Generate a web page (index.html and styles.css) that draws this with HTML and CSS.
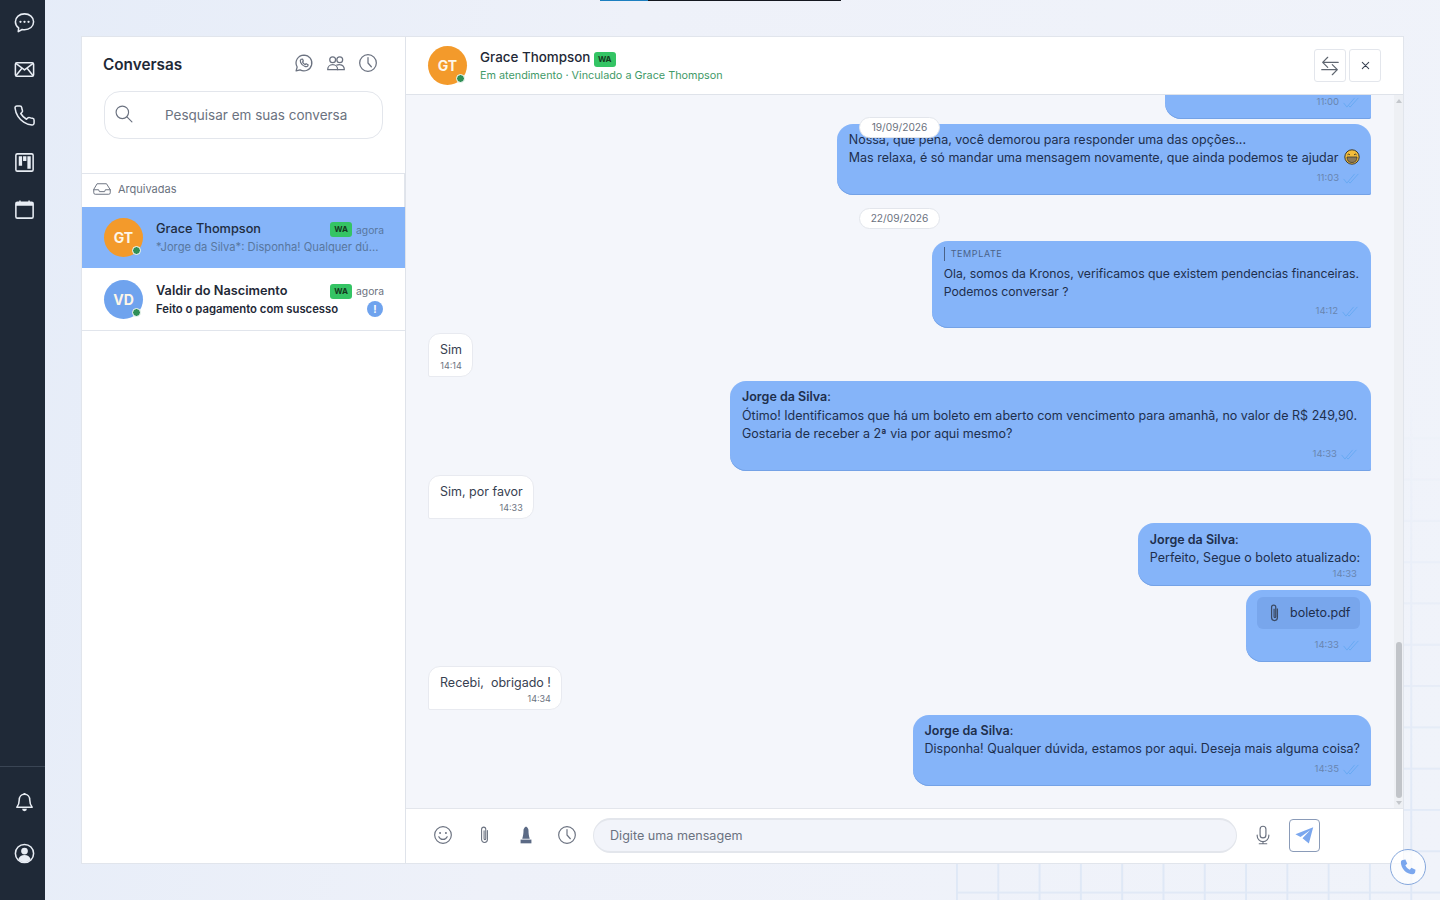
FILE: index.html
```html
<!DOCTYPE html>
<html lang="pt-br">

<head>
    <meta charset="UTF-8">
    <title>Conversas</title>
    <link rel="stylesheet" href="styles.css">
</head>

<body>
    <svg class="defs" aria-hidden="true">
        <symbol id="i-clock" viewBox="0 0 24 24"><circle cx="12" cy="12" r="10"/><path d="M12 5.500V12l4 4.500"/></symbol>
        <symbol id="i-check" viewBox="0 0 18 12"><path d="M1 6.500L4.500 11 13 1M6 9l2 2L17 1"/></symbol>
        <symbol id="i-clip" viewBox="0 0 12 24"><path d="M9.500 6.500v11a3.500 3.500 0 0 1-7 0V5a2.500 2.500 0 0 1 5 0v11.500a1 1 0 0 1-2 0V7"/></symbol>
    </svg>

    <div class="top_strip"></div>
    <div class="bg_grid"></div>

    <nav class="rail">
        <div class="rail_group">
            <a class="rail_item">
                <svg viewBox="0 0 24 24"><path d="M12 3c5.300 0 9.500 3.600 9.500 8.300s-4.200 8.300-9.500 8.300c-.9 0-1.700-.1-2.500-.3L5.500 21.500l.4-3.800C3.800 16.200 2.500 13.900 2.500 11.300 2.500 6.600 6.700 3 12 3z"/><circle class="fill" cx="7.800" cy="11.300" r="1.200"/><circle class="fill" cx="12" cy="11.300" r="1.200"/><circle class="fill" cx="16.200" cy="11.300" r="1.200"/></svg>
            </a>
            <a class="rail_item">
                <svg viewBox="0 0 24 24"><rect x="2.500" y="5" width="19" height="14" rx="1.500"/><path d="M3 5.500l9 7 9-7M3 18.500l6.500-8M21 18.500l-6.500-8"/></svg>
            </a>
            <a class="rail_item">
                <svg viewBox="0 0 24 24"><path d="M22 16.920v3a2 2 0 0 1-2.180 2 19.790 19.790 0 0 1-8.630-3.070 19.500 19.500 0 0 1-6-6 19.790 19.790 0 0 1-3.070-8.670A2 2 0 0 1 4.110 2h3a2 2 0 0 1 2 1.720 12.840 12.840 0 0 0 .7 2.810 2 2 0 0 1-.45 2.110L8.090 9.910a16 16 0 0 0 6 6l1.270-1.270a2 2 0 0 1 2.110-.45 12.840 12.840 0 0 0 2.810.7A2 2 0 0 1 22 16.920z"/></svg>
            </a>
            <a class="rail_item">
                <svg viewBox="0 0 24 24"><rect x="3" y="3" width="18" height="18" rx="1.500"/><path class="fill" d="M6 5.500h3.500v10H6zM10.500 5.500h3.500v5h-3.500zM15 5.500h3.500v13H15z"/></svg>
            </a>
            <a class="rail_item">
                <svg viewBox="0 0 24 24"><rect x="3" y="4.500" width="18" height="16.500" rx="1.500"/><path class="fill" d="M3 4.500h18v3.500H3zM6.500 2.500h1.500v2H6.500zM16 2.500h1.500v2H16z"/></svg>
            </a>
        </div>
        <div class="rail_group rail_bottom">
            <a class="rail_item">
                <svg viewBox="0 0 24 24"><path d="M12 3.500c-3.500 0-5.500 2.700-5.500 6 0 4-1 5.800-2.500 7.500h16c-1.500-1.700-2.500-3.500-2.500-7.500 0-3.300-2-6-5.500-6z"/><path class="fill" d="M9.500 18.500h5a2.500 2.500 0 0 1-5 0zM11 2h2v2h-2z"/></svg>
            </a>
            <a class="rail_item">
                <svg viewBox="0 0 24 24"><circle cx="12" cy="12" r="9.500"/><circle class="fill" cx="12" cy="9.500" r="3.500"/><path class="fill" d="M5.500 18c1-3 3.500-4.500 6.500-4.500s5.500 1.500 6.500 4.500c-1.700 2-4 3-6.500 3s-4.800-1-6.500-3z"/></svg>
            </a>
        </div>
    </nav>

    <main class="page">
        <div class="card">

            <!-- lista de conversas -->
            <aside class="list_panel">
                <div class="list_head">
                    <h1>Conversas</h1>
                    <div class="list_tools">
                        <svg class="ico" viewBox="0 0 24 24"><path d="M12 2.500a9.500 9.500 0 0 0-8.200 14.300L2.500 21.500l4.800-1.200A9.500 9.500 0 1 0 12 2.500z"/><path d="M8.500 7.500c-1 .8-1.200 2.200-.5 3.800 1 2.200 3 4.100 5.200 4.900 1.500.5 2.700.2 3.400-.8l.3-1.300-2.400-1.200-1 1c-1.300-.5-2.600-1.800-3.200-3.200l.9-1-1-2.400z"/></svg>
                        <svg class="ico" viewBox="0 0 24 24"><circle cx="8" cy="8" r="3.500"/><circle cx="16.500" cy="8" r="3.500"/><path d="M2 20c0-3.500 2.500-6 6-6s6 2.500 6 6H2z"/><path d="M13 14.500c1-.5 2.200-.8 3.500-.6 3 .3 5.500 2.600 5.500 6.100h-8"/></svg>
                        <svg class="ico"><use href="#i-clock"/></svg>
                    </div>
                </div>

                <label class="search">
                    <svg class="ico search_ico" viewBox="0 0 24 24"><circle cx="10" cy="10" r="7.500"/><path d="M15.500 15.500l6 6"/></svg>
                    <input type="text" placeholder="Pesquisar em suas conversa">
                </label>

                <div class="archived">
                    <svg class="ico" viewBox="0 0 24 24"><path d="M6 5h12l5 8v4a2 2 0 0 1-2 2H3a2 2 0 0 1-2-2v-4z"/><path d="M1 13h6.500l1 2.500h7l1-2.500H23"/></svg>
                    <span>Arquivadas</span>
                </div>

                <div class="conv conv_active">
                    <div class="avatar avatar_orange">GT<span class="dot"></span></div>
                    <div class="conv_body">
                        <div class="conv_line">
                            <span class="conv_name">Grace Thompson</span>
                            <span class="badge_wa">WA</span>
                            <span class="conv_time">agora</span>
                        </div>
                        <div class="conv_line">
                            <span class="conv_last">*Jorge da Silva*: Disponha! Qualquer dú...</span>
                        </div>
                    </div>
                </div>

                <div class="conv">
                    <div class="avatar avatar_blue">VD<span class="dot"></span></div>
                    <div class="conv_body">
                        <div class="conv_line">
                            <span class="conv_name conv_name_strong">Valdir do Nascimento</span>
                            <span class="badge_wa">WA</span>
                            <span class="conv_time">agora</span>
                        </div>
                        <div class="conv_line">
                            <span class="conv_last conv_last_strong">Feito o pagamento com suscesso</span>
                            <span class="unread">!</span>
                        </div>
                    </div>
                </div>
            </aside>

            <!-- chat -->
            <section class="chat">
                <header class="chat_head">
                    <div class="avatar avatar_orange">GT<span class="dot"></span></div>
                    <div class="chat_who">
                        <div class="chat_name">Grace Thompson <span class="badge_wa">WA</span></div>
                        <div class="chat_status">Em atendimento · Vinculado a Grace Thompson</div>
                    </div>
                    <div class="chat_actions">
                        <button class="btn_square">
                            <svg class="ico ico_btn" viewBox="0 0 24 24"><path d="M21 8H4M9.500 2.500L4 8l5.500 5.500"/><path d="M3 16h17M14.500 10.500L20 16l-5.500 5.500"/></svg>
                        </button>
                        <button class="btn_square">
                            <svg class="ico ico_x" viewBox="0 0 24 24"><path d="M5 5l14 14M19 5L5 19"/></svg>
                        </button>
                    </div>
                </header>

                <div class="chat_mid">
                    <div class="messages">
                        <span class="date_chip date_sticky">19/09/2026</span>

                        <div class="msg msg_out msg_clipped">
                            <div class="meta meta_read">11:00 <svg class="check"><use href="#i-check"/></svg></div>
                        </div>

                        <div class="msg msg_out msg_sep">
                            <p>Nossa, que pena, você demorou para responder uma das opções...</p>
                            <p>Mas relaxa, é só mandar uma mensagem novamente, que ainda podemos te ajudar
                                <svg class="emoji" viewBox="0 0 16 16"><circle cx="8" cy="8" r="7.200" fill="#f4bd3b" stroke="#3d3a30" stroke-width="1"/><path d="M3.500 5.800q1.200-1.400 2.400 0M10.100 5.800q1.200-1.400 2.400 0" fill="none" stroke="#3d3a30" stroke-width="1"/><path d="M3 8h10q0 5.500-5 5.500T3 8z" fill="#8c7a5a" stroke="#3d3a30" stroke-width=".8"/></svg>
                            </p>
                            <div class="meta meta_read">11:03 <svg class="check"><use href="#i-check"/></svg></div>
                        </div>

                        <span class="date_chip date_flow">22/09/2026</span>

                        <div class="msg msg_out msg_template">
                            <div class="template_tag">TEMPLATE</div>
                            <p>Ola, somos da Kronos, verificamos que existem pendencias financeiras.</p>
                            <p>Podemos conversar ?</p>
                            <div class="meta meta_read">14:12 <svg class="check"><use href="#i-check"/></svg></div>
                        </div>

                        <div class="msg msg_in msg_sep">
                            <p>Sim</p>
                            <div class="meta">14:14</div>
                        </div>

                        <div class="msg msg_out msg_long">
                            <p class="msg_author"><strong>Jorge da Silva</strong>:</p>
                            <p>Ótimo! Identificamos que há um boleto em aberto com vencimento para amanhã, no valor de R$ 249,90.</p>
                            <p>Gostaria de receber a 2ª via por aqui mesmo?</p>
                            <div class="meta meta_read">14:33 <svg class="check"><use href="#i-check"/></svg></div>
                        </div>

                        <div class="msg msg_in">
                            <p>Sim, por favor</p>
                            <div class="meta meta_end">14:33</div>
                        </div>

                        <div class="msg msg_out msg_short">
                            <p><strong>Jorge da Silva</strong>:</p>
                            <p>Perfeito, Segue o boleto atualizado:</p>
                            <div class="meta">14:33</div>
                        </div>

                        <div class="msg msg_out msg_file">
                            <div class="file_chip">
                                <svg class="clip_ico"><use href="#i-clip"/></svg>
                                <span>boleto.pdf</span>
                            </div>
                            <div class="meta meta_read">14:33 <svg class="check"><use href="#i-check"/></svg></div>
                        </div>

                        <div class="msg msg_in">
                            <p>Recebi,&nbsp; obrigado !</p>
                            <div class="meta meta_end">14:34</div>
                        </div>

                        <div class="msg msg_out msg_sep">
                            <p><strong>Jorge da Silva</strong>:</p>
                            <p>Disponha! Qualquer dúvida, estamos por aqui. Deseja mais alguma coisa?</p>
                            <div class="meta meta_read">14:35 <svg class="check"><use href="#i-check"/></svg></div>
                        </div>
                    </div>

                    <div class="scrollbar">
                        <span class="arrow_up"></span>
                        <span class="thumb"></span>
                        <span class="arrow_down"></span>
                    </div>
                </div>

                <footer class="composer">
                    <svg class="ico tool" viewBox="0 0 24 24"><circle cx="12" cy="12" r="10"/><circle class="fill" cx="8.500" cy="9.500" r="1.200"/><circle class="fill" cx="15.500" cy="9.500" r="1.200"/><path d="M7 14c1 2.200 2.800 3.300 5 3.300s4-1.100 5-3.300"/></svg>
                    <svg class="ico tool tool_clip"><use href="#i-clip"/></svg>
                    <svg class="tool tool_stamp" viewBox="0 0 24 24"><path d="M12 2c1 0 1.500.8 2 1.500.8 1 1 2 1 3.500 0 3 .5 6.500 1.500 9.500h-9c1-3 1.500-6.500 1.500-9.500 0-1.500.2-2.500 1-3.500.5-.7 1-1.500 2-1.500z"/><path d="M5.500 17.500h13V22h-13z"/></svg>
                    <svg class="ico tool"><use href="#i-clock"/></svg>
                    <input class="composer_input" type="text" placeholder="Digite uma mensagem">
                    <svg class="ico tool tool_mic" viewBox="0 0 24 24"><rect x="8.500" y="1.500" width="7" height="14" rx="3.500"/><path d="M5 12v1a7 7 0 0 0 14 0v-1M12 20v2.500M7.500 22.500h9"/></svg>
                    <button class="btn_send">
                        <svg viewBox="0 0 24 24"><path class="plane" d="M23 1.500L0.500 10.500l6.500 3.500L19 5.500 9.500 15.500l8 6.500z"/></svg>
                    </button>
                </footer>
            </section>
        </div>
    </main>

    <button class="call_fab">
        <svg viewBox="0 0 24 24"><path d="M5 2.500l3.500-.5 2.500 5.500-2.500 2c1 2.500 3.500 5 6 6l2-2.500 5.500 2.500-.5 3.500c-.3 1.500-1.500 2.500-3 2.500C10 21.500 2.500 14 2.500 5.500c0-1.500 1-2.700 2.500-3z"/></svg>
    </button>
</body>

</html>
```

FILE: styles.css
```css
* {
    margin: 0;
    padding: 0;
    box-sizing: border-box;
    font-family: "Inter", "Noto Sans", sans-serif;
}

html,
body {
    width: 100%;
    height: 100%;
    overflow: hidden;
}

body {
    display: flex;
    background: linear-gradient(100deg, #e5ecf8 0%, #eef1f9 40%, #f0f3fa 100%);
    color: #1f2937;
}

.defs {
    display: none;
}

.top_strip {
    position: absolute;
    top: 0;
    left: 600px;
    width: 241px;
    height: 1px;
    background: linear-gradient(90deg, #1c7fc0 0, #1c7fc0 48px, #14171f 48px);
}

.bg_grid {
    position: absolute;
    right: 0;
    bottom: 0;
    width: 484px;
    height: 500px;
    background-image:
        linear-gradient(90deg, #dfe8f6 2px, transparent 2px),
        linear-gradient(#e1e9f6 2px, transparent 2px);
    background-size: 41.300px 41.300px;
    background-position: 0 -4px;
    -webkit-mask-image: linear-gradient(to bottom, transparent 0, #000 90%);
    mask-image: linear-gradient(to bottom, transparent 0, #000 90%);
}

/* --------------------- Menu lateral --------------------- */

.rail {
    position: relative;
    width: 45px;
    flex-shrink: 0;
    background-color: #1f2937;
    display: flex;
    flex-direction: column;
    justify-content: space-between;
}

.rail_group {
    display: flex;
    flex-direction: column;
    padding-left: 4px;
}

.rail_group:first-child {
    margin-top: -1px;
}

.rail_bottom {
    border-top: 1px solid #3a4554;
    padding-top: 22px;
    padding-bottom: 34px;
    row-gap: 25px;
}

.rail_item {
    height: 46.700px;
    display: flex;
    align-items: center;
    justify-content: center;
}

.rail_bottom .rail_item {
    height: 26px;
}

.rail_item svg {
    width: 23px;
    height: 23px;
    fill: none;
    stroke: #e8edf4;
    stroke-width: 1.600;
    stroke-linejoin: round;
}

.rail_item svg .fill {
    fill: #e8edf4;
    stroke: none;
}

/* --------------------- Card --------------------- */

.page {
    position: relative;
    flex: 1;
    padding: 36px;
    min-width: 0;
}

.card {
    width: 100%;
    height: 100%;
    display: flex;
    background-color: #fff;
    border: 1px solid #e1e5ec;
}

.ico {
    fill: none;
    stroke: #6b7280;
    stroke-width: 1.400;
    stroke-linecap: round;
    stroke-linejoin: round;
}

.ico .fill {
    fill: #6b7280;
    stroke: none;
}

/* --------------------- Lista --------------------- */

.list_panel {
    width: 324px;
    flex-shrink: 0;
    border-right: 1px solid #dfe3ea;
    display: flex;
    flex-direction: column;
}

.list_head {
    height: 54px;
    padding: 14px 27px 0 21px;
    display: flex;
    justify-content: space-between;
    align-items: flex-start;
}

.list_head h1 {
    font-size: 15.300px;
    font-weight: 600;
    line-height: 28px;
    color: #1f2937;
}

.list_tools {
    display: flex;
    column-gap: 12px;
}

.list_tools .ico {
    width: 20px;
    height: 20px;
    stroke-width: 1.500;
    overflow: visible;
    margin-top: 2px;
}

.search {
    height: 48px;
    margin: 0 22px 0 22px;
    padding-left: 9px;
    border: 1px solid #e3e6ec;
    border-radius: 16px;
    display: flex;
    align-items: center;
}

.search_ico {
    width: 20px;
    height: 20px;
    margin: -2px 31px 0 0;
    flex-shrink: 0;
}

.search input {
    border: 0;
    outline: 0;
    background: transparent;
    flex: 1;
    min-width: 0;
    font-size: 13.500px;
}

.search input::placeholder {
    color: #6b7280;
    opacity: 1;
}

.archived {
    margin-top: 34px;
    height: 34px;
    padding: 0 0 3px 11px;
    border-top: 1px solid #e1e5ec;
    border-right: 1px solid #e1e5ec;
    display: flex;
    align-items: center;
    column-gap: 7px;
    font-size: 11px;
    color: #6b7280;
}

.archived .ico {
    width: 18px;
    height: 18px;
    stroke-width: 1.300;
}

.conv {
    height: 63px;
    padding: 0 21px 0 22px;
    border-bottom: 1px solid #e1e5ec;
    display: flex;
    align-items: center;
    column-gap: 13px;
}

.conv_active {
    height: 61px;
    background-color: #85b4f9;
    border-bottom: 0;
}

.avatar {
    position: relative;
    width: 39px;
    height: 39px;
    border-radius: 50%;
    flex-shrink: 0;
    color: #fdf6e8;
    font-size: 14px;
    font-weight: 700;
    display: flex;
    align-items: center;
    justify-content: center;
}

.avatar_orange {
    background-color: #f39a2b;
}

.avatar_blue {
    background-color: #6fa3ee;
}

.dot {
    position: absolute;
    right: 2px;
    bottom: 2px;
    width: 9px;
    height: 9px;
    border-radius: 50%;
    background-color: #2f8f57;
    border: 1px solid #fff;
}

.conv_body {
    flex: 1;
    min-width: 0;
    display: flex;
    flex-direction: column;
    row-gap: 2px;
}

.conv_line {
    height: 17px;
    display: flex;
    align-items: center;
}

.conv_name {
    flex: 1;
    font-size: 12.750px;
    font-weight: 500;
    color: #1f2c40;
}

.conv_name_strong {
    margin-top: 2px;
    font-weight: 600;
    color: #1f2937;
}

.badge_wa {
    display: inline-block;
    background-color: #34c464;
    color: #14391f;
    font-size: 8px;
    font-weight: 700;
    line-height: 15px;
    height: 15px;
    padding: 0 4px;
    border-radius: 3px;
}

.conv_line .badge_wa {
    margin-top: 3px;
}

.conv_time {
    margin: 3px 0 0 4px;
    font-size: 10.300px;
    color: #6b7280;
}

.conv_active .conv_time {
    color: #58779f;
}

.conv_last {
    flex: 1;
    min-width: 0;
    font-size: 11.200px;
    color: #58779f;
    white-space: nowrap;
}

.conv_last_strong {
    font-size: 11.300px;
    font-weight: 600;
    color: #1f2937;
}

.unread {
    width: 16px;
    height: 16px;
    border-radius: 50%;
    background-color: #6fa3ee;
    color: #fff;
    font-size: 10px;
    font-weight: 700;
    text-align: center;
    line-height: 16px;
    margin: 0 1px 0 6px;
}

/* --------------------- Chat --------------------- */

.chat {
    flex: 1;
    min-width: 0;
    display: flex;
    flex-direction: column;
}

.chat_head {
    height: 58px;
    flex-shrink: 0;
    padding: 0 22px;
    border-bottom: 1px solid #dfe3ea;
    display: flex;
    align-items: center;
    column-gap: 13px;
}

.chat_who {
    flex: 1;
    display: flex;
    flex-direction: column;
    row-gap: 2px;
    margin-bottom: 1px;
}

.chat_name {
    font-size: 13.400px;
    font-weight: 500;
    line-height: 18px;
    color: #1f2937;
}

.chat_status {
    font-size: 10.800px;
    line-height: 14px;
    color: #3f9a68;
}

.chat_actions {
    display: flex;
    column-gap: 3px;
}

.btn_square {
    width: 32px;
    height: 33px;
    background-color: #fff;
    border: 1px solid #e3e6ec;
    border-radius: 3px;
    display: flex;
    align-items: center;
    justify-content: center;
}

.ico_btn {
    width: 22px;
    height: 22px;
    stroke: #5f6670;
    stroke-width: 1.300;
}

.ico_x {
    width: 11px;
    height: 11px;
    stroke: #374151;
    stroke-width: 2.200;
}

.chat_mid {
    flex: 1;
    min-height: 0;
    display: flex;
    background-color: #f4f6fb;
}

.messages {
    position: relative;
    flex: 1;
    min-width: 0;
    overflow: hidden;
    padding: 0 23px 22px 22px;
    display: flex;
    flex-direction: column;
    justify-content: flex-end;
    row-gap: 4px;
}

.msg {
    flex-shrink: 0;
    font-size: 12.500px;
    line-height: 18px;
}

.msg p {
    white-space: nowrap;
}

.msg strong {
    font-weight: 600;
}

.msg_sep {
    margin-top: 1px;
}

.msg_out {
    align-self: flex-end;
    background-color: #85b4f9;
    color: #1e2f4d;
    padding: 7px 11px 10px 12px;
    border-radius: 16px 16px 2px 16px;
    box-shadow: inset 0 -1px 0 #74a2e6;
}

.msg_in {
    align-self: flex-start;
    background-color: #fff;
    color: #374151;
    padding: 7px 10px 4px 11px;
    border: 1px solid #e8eaf0;
    border-radius: 12px 12px 12px 2px;
}

.msg_clipped {
    width: 206px;
    height: 40px;
    display: flex;
    flex-direction: column;
    justify-content: flex-end;
}

.msg_short {
    padding-top: 8px;
    padding-bottom: 5px;
}

.msg_short .meta {
    padding-right: 3px;
}

.msg_long {
    padding-right: 14px;
    padding-bottom: 10px;
}

.msg_long .msg_author {
    margin-bottom: 1px;
}

.msg_long .meta {
    margin-right: -1px;
}

.msg_template {
    padding-top: 6px;
    padding-right: 12px;
    font-size: 12.230px;
}

.msg_file {
    padding-top: 7px;
}

.meta {
    height: 14px;
    display: flex;
    justify-content: flex-end;
    align-items: center;
    column-gap: 3px;
    font-size: 9.500px;
    color: #6885b0;
}

.msg_in .meta {
    height: 12px;
    margin-top: 1px;
    justify-content: center;
    color: #6b7280;
    font-size: 9px;
}

.msg_in .meta_end {
    justify-content: flex-end;
}

.meta_read {
    margin-top: 4px;
}

.msg_template .meta_read {
    margin-top: 3px;
}

.msg_file .meta_read {
    margin-top: 9px;
}

.check {
    width: 18px;
    height: 11px;
    fill: none;
    stroke: #66a8f2;
    stroke-width: 1;
}

.emoji {
    width: 16px;
    height: 16px;
    vertical-align: -3px;
    margin-left: 2px;
}

.date_chip {
    flex-shrink: 0;
    width: 81px;
    height: 21px;
    background-color: #fff;
    border: 1px solid #e3e6ec;
    border-radius: 11px;
    font-size: 10.200px;
    line-height: 19px;
    text-align: center;
    color: #6b7280;
}

.date_flow {
    align-self: center;
    margin-top: 9px;
    margin-bottom: 8px;
}

.date_sticky {
    position: absolute;
    top: 22px;
    left: 50%;
    margin-left: -41px;
    z-index: 2;
}

.template_tag {
    height: 14px;
    margin-bottom: 4px;
    padding-left: 6px;
    border-left: 1px solid #4a6288;
    font-size: 9px;
    line-height: 14px;
    letter-spacing: .6px;
    color: #4a6288;
}

.file_chip {
    width: 103px;
    height: 32px;
    margin-left: -1px;
    padding-left: 12px;
    background-color: #78a6ec;
    border-radius: 6px;
    display: flex;
    align-items: center;
    column-gap: 10px;
    font-size: 12.500px;
}

.clip_ico {
    width: 11px;
    height: 20px;
    fill: none;
    stroke: #3b4a63;
    stroke-width: 1.500;
}

.scrollbar {
    position: relative;
    width: 9px;
    flex-shrink: 0;
    background-color: #eef0f4;
    display: flex;
    flex-direction: column;
    align-items: center;
    padding-top: 4px;
    padding-bottom: 3px;
}

.arrow_up {
    width: 0;
    height: 0;
    border-left: 3px solid transparent;
    border-right: 3px solid transparent;
    border-bottom: 4px solid #c4c7cc;
}

.arrow_down {
    width: 0;
    height: 0;
    border-left: 3px solid transparent;
    border-right: 3px solid transparent;
    border-top: 4px solid #c4c7cc;
    margin-top: 3px;
}

.thumb {
    width: 6px;
    height: 156px;
    margin-top: auto;
    border-radius: 3px;
    background-color: #c1c4c9;
}

/* --------------------- Mensagem --------------------- */

.composer {
    height: 55px;
    flex-shrink: 0;
    border-top: 1px solid #e3e6ec;
    padding: 0 83px 1px 27px;
    display: flex;
    align-items: center;
}

.tool {
    width: 20px;
    height: 20px;
    flex-shrink: 0;
    margin: -2px 21px 0 0;
}

.tool_clip {
    width: 11px;
    margin-left: 5px;
    margin-right: 26px;
    stroke-width: 1.300;
}

.tool_stamp {
    fill: #5b6a85;
    margin-right: 21px;
}

.composer_input {
    flex: 1;
    min-width: 0;
    height: 35px;
    margin-left: -5px;
    padding-left: 16px;
    background-color: #f2f4fa;
    border: 1px solid #e3e6ec;
    border-top-width: 2px;
    border-bottom-width: 2px;
    border-radius: 18px;
    outline: 0;
    font-size: 12.600px;
}

.composer_input::placeholder {
    color: #6b7280;
    opacity: 1;
}

.tool_mic {
    margin: -2px 0 0 16px;
}

.btn_send {
    width: 31px;
    height: 33px;
    margin-left: 16px;
    flex-shrink: 0;
    background-color: #fff;
    border: 1px solid #8a9bb8;
    border-radius: 4px;
    display: flex;
    align-items: center;
    justify-content: center;
}

.btn_send svg {
    width: 19px;
    height: 19px;
}

.plane {
    fill: #7ba7ee;
}

.call_fab {
    position: absolute;
    left: 1390px;
    top: 849px;
    width: 36px;
    height: 36px;
    background-color: rgba(255, 255, 255, .7);
    border: 1px solid #85a7dc;
    border-radius: 50%;
    display: flex;
    align-items: center;
    justify-content: center;
}

.call_fab svg {
    width: 18px;
    height: 18px;
    fill: #7ba7ee;
}
```
